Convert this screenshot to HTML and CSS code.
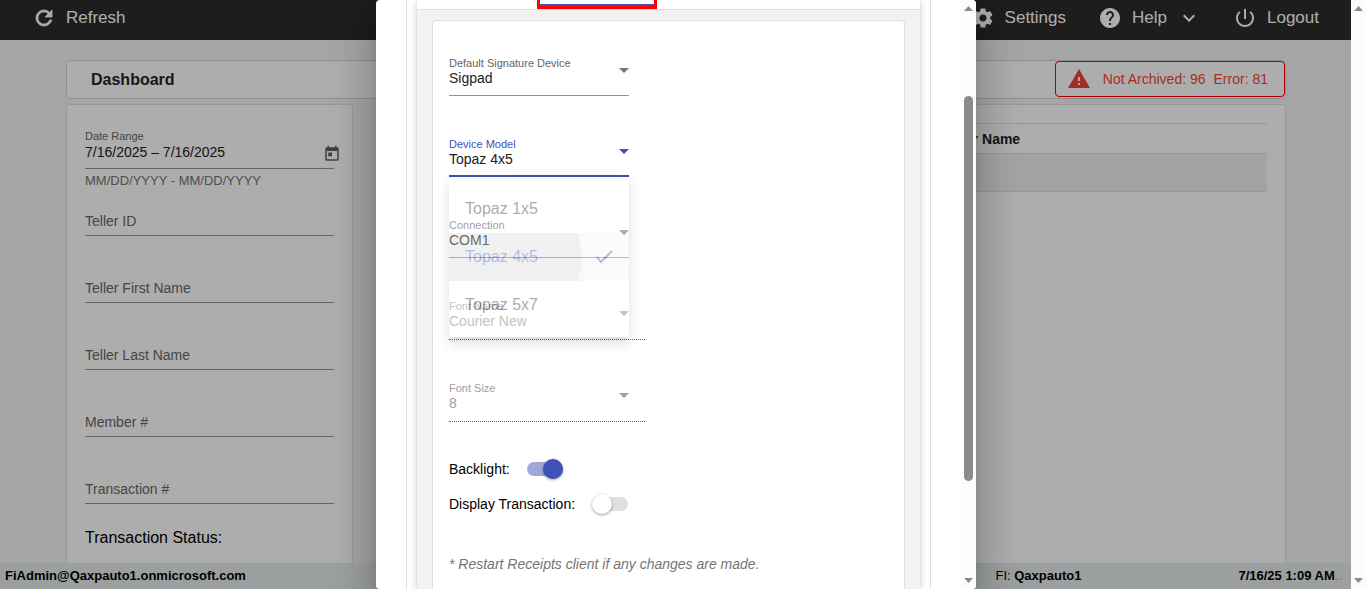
FILE: index.html
```html
<!DOCTYPE html>
<html lang="en">
<head>
  <meta charset="UTF-8" />
  <meta name="viewport" content="width=device-width, initial-scale=1.0"/>
  <title>Dashboard</title>
  <link rel="stylesheet" href="styles.css">
</head>
<body>

  <div class="app">
    <header class="topbar">
      <button class="nav-btn">
        <svg class="icon bold" viewBox="0 0 24 24"><path d="M17.65 6.35C16.2 4.9 14.21 4 12 4c-4.42 0-7.99 3.58-7.99 8s3.57 8 7.99 8c3.73 0 6.84-2.55 7.73-6h-2.08c-.82 2.33-3.04 4-5.65 4-3.31 0-6-2.69-6-6s2.69-6 6-6c1.66 0 3.14.69 4.22 1.78L13 11h7V4l-2.35 2.35z"/></svg>
        Refresh
      </button>
      <nav class="nav-right">
        <button class="nav-btn">
          <svg class="icon" viewBox="0 0 24 24"><path d="M19.14 12.94c.04-.3.06-.61.06-.94 0-.32-.02-.64-.07-.94l2.03-1.58c.18-.14.23-.41.12-.61l-1.92-3.32c-.12-.22-.37-.29-.59-.22l-2.39.96c-.5-.38-1.03-.7-1.62-.94l-.36-2.54c-.04-.24-.24-.41-.48-.41h-3.84c-.24 0-.43.17-.47.41l-.36 2.54c-.59.24-1.13.57-1.62.94l-2.39-.96c-.22-.08-.47 0-.59.22L2.74 8.87c-.12.21-.08.47.12.61l2.03 1.58c-.05.3-.09.63-.09.94s.02.64.07.94l-2.03 1.58c-.18.14-.23.41-.12.61l1.92 3.32c.12.22.37.29.59.22l2.39-.96c.5.38 1.03.7 1.62.94l.36 2.54c.05.24.24.41.48.41h3.84c.24 0 .44-.17.47-.41l.36-2.54c.59-.24 1.13-.56 1.62-.94l2.39.96c.22.08.47 0 .59-.22l1.92-3.32c.12-.22.07-.47-.12-.61l-2.01-1.58zM12 15.6c-1.98 0-3.6-1.62-3.6-3.6s1.62-3.6 3.6-3.6 3.6 1.62 3.6 3.6-1.62 3.6-3.6 3.6z"/></svg>
          Settings
        </button>
        <button class="nav-btn">
          <svg class="icon" viewBox="0 0 24 24"><path d="M12 2C6.48 2 2 6.48 2 12s4.48 10 10 10 10-4.48 10-10S17.52 2 12 2zm1 17h-2v-2h2v2zm2.07-7.75l-.9.92C13.45 12.9 13 13.5 13 15h-2v-.5c0-1.1.45-2.1 1.17-2.83l1.24-1.26c.37-.36.59-.86.59-1.41 0-1.1-.9-2-2-2s-2 .9-2 2H8c0-2.21 1.79-4 4-4s4 1.79 4 4c0 .88-.36 1.68-.93 2.25z"/></svg>
          Help
          <svg class="icon" viewBox="0 0 24 24"><path d="M16.59 8.59L12 13.17 7.41 8.59 6 10l6 6 6-6z"/></svg>
        </button>
        <button class="nav-btn">
          <svg class="icon" viewBox="0 0 24 24"><path d="M13 3h-2v10h2V3zm4.83 2.17l-1.42 1.42C17.99 7.86 19 9.81 19 12c0 3.87-3.13 7-7 7s-7-3.13-7-7c0-2.19 1.01-4.14 2.58-5.42L6.17 5.17C4.23 6.82 3 9.26 3 12c0 4.97 4.03 9 9 9s9-4.03 9-9c0-2.74-1.23-5.18-3.17-6.83z"/></svg>
          Logout
        </button>
      </nav>
    </header>

    <main class="content">
      <div class="title-card">
        <h1 class="title">Dashboard</h1>
        <button class="alert">
          <svg class="icon" viewBox="0 0 24 24"><path d="M1 21h22L12 2 1 21zm12-3h-2v-2h2v2zm0-4h-2v-4h2v4z"/></svg>
          <span class="counts"><span>Not Archived: 96</span><span>Error: 81</span></span>
        </button>
      </div>

      <div class="columns">
        <aside class="filters">
          <div class="date-field">
            <div class="date-box">
              <div class="date-text">
                <label class="float-label" for="range">Date Range</label>
                <input class="date-input" id="range" type="text" value="7/16/2025 – 7/16/2025">
              </div>
              <button class="calendar-btn" aria-label="Open calendar">
                <svg class="calendar-icon" viewBox="0 0 24 24"><path d="M19 3h-1V1h-2v2H8V1H6v2H5c-1.11 0-1.99.9-1.99 2L3 19c0 1.1.89 2 2 2h14c1.1 0 2-.9 2-2V5c0-1.1-.9-2-2-2zm0 16H5V8h14v11zM7 10h5v5H7z"/></svg>
              </button>
            </div>
            <div class="hint">MM/DD/YYYY - MM/DD/YYYY</div>
          </div>
          <div class="text-fields">
            <input class="text-input" type="text" placeholder="Teller ID" aria-label="Teller ID">
            <input class="text-input" type="text" placeholder="Teller First Name" aria-label="Teller First Name">
            <input class="text-input" type="text" placeholder="Teller Last Name" aria-label="Teller Last Name">
            <input class="text-input" type="text" placeholder="Member #" aria-label="Member #">
            <input class="text-input" type="text" placeholder="Transaction #" aria-label="Transaction #">
          </div>
          <div class="status-title">Transaction Status:</div>
        </aside>

        <section class="results">
          <table class="results-table">
            <thead>
              <tr><th class="col-date">Date</th><th>User Name</th></tr>
            </thead>
            <tbody>
              <tr><td></td><td></td></tr>
            </tbody>
          </table>
        </section>
      </div>
    </main>

    <footer class="statusbar">
      <b>FiAdmin@Qaxpauto1.onmicrosoft.com</b>
      <span class="tenant">FI: <b>Qaxpauto1</b></span>
      <span><b>7/16/25 1:09 AM</b><span class="dots">..</span></span>
    </footer>

    <div class="backdrop">
      <div class="dialog" role="dialog" aria-label="Settings">
        <div class="dialog-body">
          <div class="frame">
            <div class="panel">
              <div class="tabs">
                <button class="tab" aria-label="Signature Device"></button>
              </div>
              <form class="card">
                <div class="fields">
                  <div class="field">
                    <label for="device">Default Signature Device</label>
                    <select id="device"><option>Sigpad</option></select>
                    <svg class="caret" viewBox="0 0 10 5"><path d="M0 0h10L5 5z"/></svg>
                  </div>
                  <div class="field focused">
                    <label for="model">Device Model</label>
                    <select id="model"><option>Topaz 4x5</option></select>
                    <svg class="caret" viewBox="0 0 10 5"><path d="M0 0h10L5 5z"/></svg>
                    <ul class="menu" role="listbox">
                      <li class="option" role="option">Topaz 1x5</li>
                      <li class="option selected" role="option" aria-selected="true">
                        Topaz 4x5
                        <svg class="check" viewBox="0 0 18 14"><path d="M2 7l4 5L17 1"/></svg>
                      </li>
                      <li class="option" role="option">Topaz 5x7</li>
                    </ul>
                  </div>
                  <div class="field">
                    <label for="connection">Connection</label>
                    <select id="connection"><option>COM1</option></select>
                    <svg class="caret" viewBox="0 0 10 5"><path d="M0 0h10L5 5z"/></svg>
                  </div>
                  <div class="field disabled">
                    <label for="font">Font Name</label>
                    <select id="font" disabled><option>Courier New</option></select>
                    <svg class="caret" viewBox="0 0 10 5"><path d="M0 0h10L5 5z"/></svg>
                  </div>
                  <div class="field disabled">
                    <label for="size">Font Size</label>
                    <select id="size" disabled><option>8</option></select>
                    <svg class="caret" viewBox="0 0 10 5"><path d="M0 0h10L5 5z"/></svg>
                  </div>
                </div>
                <div class="toggles">
                  <label class="toggle">Backlight: <input class="switch" type="checkbox" checked></label>
                  <label class="toggle">Display Transaction: <input class="switch" type="checkbox"></label>
                </div>
                <p class="note">* Restart Receipts client if any changes are made.</p>
              </form>
            </div>
          </div>
        </div>
        <div class="scrollbar">
          <svg class="arrow" viewBox="0 0 9 5"><path d="M4.500 0L9 5H0z"/></svg>
          <div class="track"><div class="thumb"></div></div>
          <svg class="arrow" viewBox="0 0 9 5"><path d="M0 0h9L4.500 5z"/></svg>
        </div>
      </div>
    </div>
  </div>

  <div class="scrollbar">
    <svg class="arrow" viewBox="0 0 9 5"><path d="M4.500 0L9 5H0z"/></svg>
    <div class="track"></div>
    <svg class="arrow" viewBox="0 0 9 5"><path d="M0 0h9L4.500 5z"/></svg>
  </div>

</body>
</html>
```

FILE: styles.css
```css
* {
  box-sizing: border-box;
}

body {
  display: flex;
  height: 100vh;
  margin: 0;
  overflow: hidden;
  font-family: "Liberation Sans", Arial, sans-serif;
  font-size: 14px;
}

button, input, select {
  margin: 0;
  padding: 0;
  border: none;
  border-radius: 0;
  outline: none;
  background: none;
  font: inherit;
  color: inherit;
}

.app {
  position: relative;
  display: flex;
  flex: 1;
  flex-direction: column;
  min-width: 0;
  overflow: hidden;
  background: #f3f3f3;
}

.icon {
  width: 24px;
  height: 24px;
  fill: currentColor;
}

.bold {
  stroke: currentColor;
  stroke-width: 0.8;
}

/* Top bar */
.topbar {
  display: flex;
  flex: none;
  justify-content: space-between;
  height: 40px;
  padding: 0 32px 4px;
  background: #2c2c2c;
  color: #fff;
  font-size: 17px;
}

.nav-right {
  display: flex;
  gap: 32px;
}

.nav-btn {
  display: flex;
  align-items: center;
  gap: 10px;
  cursor: pointer;
}

/* Dashboard */
.content {
  display: flex;
  flex: 1;
  flex-direction: column;
  gap: 5px;
  min-height: 0;
  padding: 20px 65px 0 66px;
}

.title-card {
  display: flex;
  flex: none;
  align-items: flex-start;
  justify-content: space-between;
  height: 39px;
  padding-left: 24px;
  border: 1px solid #d3d3d3;
  border-radius: 5px;
  background: #fff;
}

.title {
  margin: 0;
  font-size: 16px;
  line-height: 37px;
  color: #212529;
}

.alert {
  display: flex;
  align-items: center;
  gap: 12px;
  height: 36px;
  padding: 0 16px 0 11px;
  border: 1px solid #f00;
  border-radius: 4px;
  color: #f44336;
  cursor: pointer;
}

.counts {
  display: flex;
  gap: 8px;
}

.columns {
  display: flex;
  flex: 1;
  gap: 30px;
  min-height: 0;
}

.filters, .results {
  border: 1px solid #e1e1e1;
  border-bottom: none;
  border-radius: 4px 4px 0 0;
  background: #fff;
}

.filters {
  flex: none;
  width: 287px;
  padding: 23px 18px 0;
  overflow: hidden;
}

.results {
  flex: 1;
  padding: 18px;
}

.date-box {
  display: flex;
  justify-content: space-between;
  padding-bottom: 8px;
  border-bottom: 1px solid #949494;
}

.date-text {
  display: flex;
  flex-direction: column;
}

.float-label {
  font-size: 11px;
  line-height: 16px;
  color: #666;
}

.date-input {
  width: 200px;
  height: 16px;
  color: #212121;
}

.calendar-btn {
  align-self: flex-end;
  margin: 0 -7px -3px 0;
}

.calendar-icon {
  display: block;
  width: 18px;
  height: 18px;
  fill: #616161;
}

.hint {
  height: 36px;
  padding-top: 4px;
  font-size: 13px;
  line-height: 16px;
  color: #757575;
}

.text-fields {
  display: flex;
  flex-direction: column;
  gap: 36px;
}

.text-input {
  width: 100%;
  height: 31px;
  padding-top: 2px;
  border-bottom: 1px solid #949494;
}

.text-input::placeholder {
  color: #666;
  opacity: 1;
}

.status-title {
  padding-top: 24px;
  font-size: 16px;
  line-height: 20px;
}

.results-table {
  width: 100%;
  border-collapse: collapse;
  table-layout: fixed;
}

.results-table th {
  height: 30px;
  padding: 0 8px;
  border-top: 1px solid #e1e1e1;
  text-align: left;
  color: #212121;
}

.results-table td {
  height: 38px;
  border-top: 1px solid #e1e1e1;
  border-bottom: 1px solid #e1e1e1;
  background: #f1f1f1;
}

.results-table .col-date {
  width: 537px;
}

.statusbar {
  display: flex;
  flex: none;
  gap: 157px;
  height: 26px;
  padding: 0 9px 0 5px;
  background: #e6eaeb;
  font-size: 13px;
  line-height: 26px;
}

.tenant {
  margin-left: auto;
}

.dots {
  color: #aaa;
}

/* Settings dialog */
.backdrop {
  position: absolute;
  inset: 0;
  display: flex;
  justify-content: center;
  padding-left: 1px;
  background: rgba(0, 0, 0, 0.32);
}

.dialog {
  display: flex;
  width: 600px;
  overflow: hidden;
  border-radius: 4px;
  background: #fff;
  box-shadow: 0 11px 15px -7px rgba(0, 0, 0, 0.2), 0 24px 38px 3px rgba(0, 0, 0, 0.14), 0 9px 46px 8px rgba(0, 0, 0, 0.12);
}

.dialog-body {
  display: flex;
  flex: 1;
  padding: 0 30px;
}

.frame {
  display: flex;
  flex: 1;
  padding: 0 10px;
  border: solid #ddd;
  border-width: 0 1px;
}

.panel {
  display: flex;
  flex: 1;
  flex-direction: column;
  background: #f2f2f2;
  box-shadow: 0 2px 1px -1px rgba(0, 0, 0, 0.2), 0 1px 1px 0 rgba(0, 0, 0, 0.14), 0 1px 8px 0 rgba(0, 0, 0, 0.2);
}

.tabs {
  display: flex;
  flex: none;
  height: 10px;
  padding-left: 120px;
  border-bottom: 1px solid #ddd;
  background: #fff;
}

.tab {
  width: 120px;
  height: 9px;
  border: 3px solid #f00;
  border-top: none;
  box-shadow: inset 0 -2px #3f51b5;
}

.card {
  flex: 1;
  margin: 10px 15px 0;
  padding: 35px 16px 0;
  border: 1px solid #ddd;
  border-bottom: none;
  border-radius: 4px 4px 0 0;
  background: #fff;
}

.fields {
  display: flex;
  flex-direction: column;
  gap: 41px;
}

.field {
  position: relative;
  display: grid;
  grid-template-columns: 1fr 10px;
  width: 180px;
  padding-bottom: 9px;
  border-bottom: 1px solid #949494;
  color: #666;
}

.field label {
  font-size: 11px;
  line-height: 15px;
}

.field select {
  grid-row: 2;
  height: 15px;
  appearance: none;
  line-height: 15px;
  color: #212121;
}

.caret {
  grid-row: 1 / 3;
  grid-column: 2;
  align-self: start;
  width: 10px;
  height: 5px;
  margin-top: 12px;
  fill: #757575;
}

.focused {
  padding-bottom: 8px;
  border-bottom: 2px solid #3f51b5;
  color: #3f51b5;
}

.focused .caret {
  fill: #3f51b5;
}

.disabled {
  width: 196px;
  padding: 0 16px 10px 0;
  border-bottom: 1px dotted #616161;
  color: #9e9e9e;
}

.disabled select {
  color: #9e9e9e;
  opacity: 1;
}

.disabled .caret {
  fill: #9e9e9e;
}

/* The list is caught half way through its fade */
.menu {
  position: absolute;
  top: calc(100% + 2px);
  left: 0;
  z-index: 1;
  width: 180px;
  margin: 0;
  padding: 8px 0;
  border-radius: 0 0 4px 4px;
  background: #fff;
  box-shadow: 0 5px 5px -3px rgba(0, 0, 0, 0.2), 0 8px 10px 1px rgba(0, 0, 0, 0.14), 0 3px 14px 2px rgba(0, 0, 0, 0.12);
  color: #212121;
  font-size: 16px;
  list-style: none;
  opacity: 0.38;
}

.option {
  display: flex;
  align-items: center;
  justify-content: space-between;
  height: 48px;
  padding: 0 16px;
}

.selected {
  background: radial-gradient(circle at 50px 24px, #dadada 82px, #f3f3f3 83px);
  color: #3f51b5;
}

.check {
  width: 18px;
  height: 14px;
  fill: none;
  stroke: #3f51b5;
  stroke-width: 2;
}

.toggles {
  display: flex;
  flex-direction: column;
  gap: 15px;
  padding-top: 37px;
}

.toggle {
  display: flex;
  align-items: center;
  gap: 17px;
  height: 20px;
}

.switch {
  display: flex;
  align-items: center;
  width: 36px;
  height: 14px;
  appearance: none;
  border-radius: 7px;
  background: #e0e0e0;
}

.switch::before {
  content: "";
  width: 20px;
  height: 20px;
  border-radius: 50%;
  background: #fff;
  box-shadow: 0 1px 3px rgba(0, 0, 0, 0.4);
}

.switch:checked {
  justify-content: flex-end;
  background: #9fa8da;
}

.switch:checked::before {
  background: #3f51b5;
}

.note {
  margin: 40px 0 0;
  font-style: italic;
  line-height: 20px;
  color: #757575;
}

/* Scroll rails */
.scrollbar {
  display: flex;
  flex: none;
  flex-direction: column;
  align-items: center;
  width: 15px;
  padding: 6px 0;
  background: #fcfcfc;
}

.arrow {
  flex: none;
  width: 9px;
  height: 5px;
  fill: #8b8b8b;
}

.track {
  flex: 1;
  padding: 85px 0 97px;
}

.thumb {
  width: 9px;
  height: 100%;
  border-radius: 5px;
  background: #8b8b8b;
}
```
